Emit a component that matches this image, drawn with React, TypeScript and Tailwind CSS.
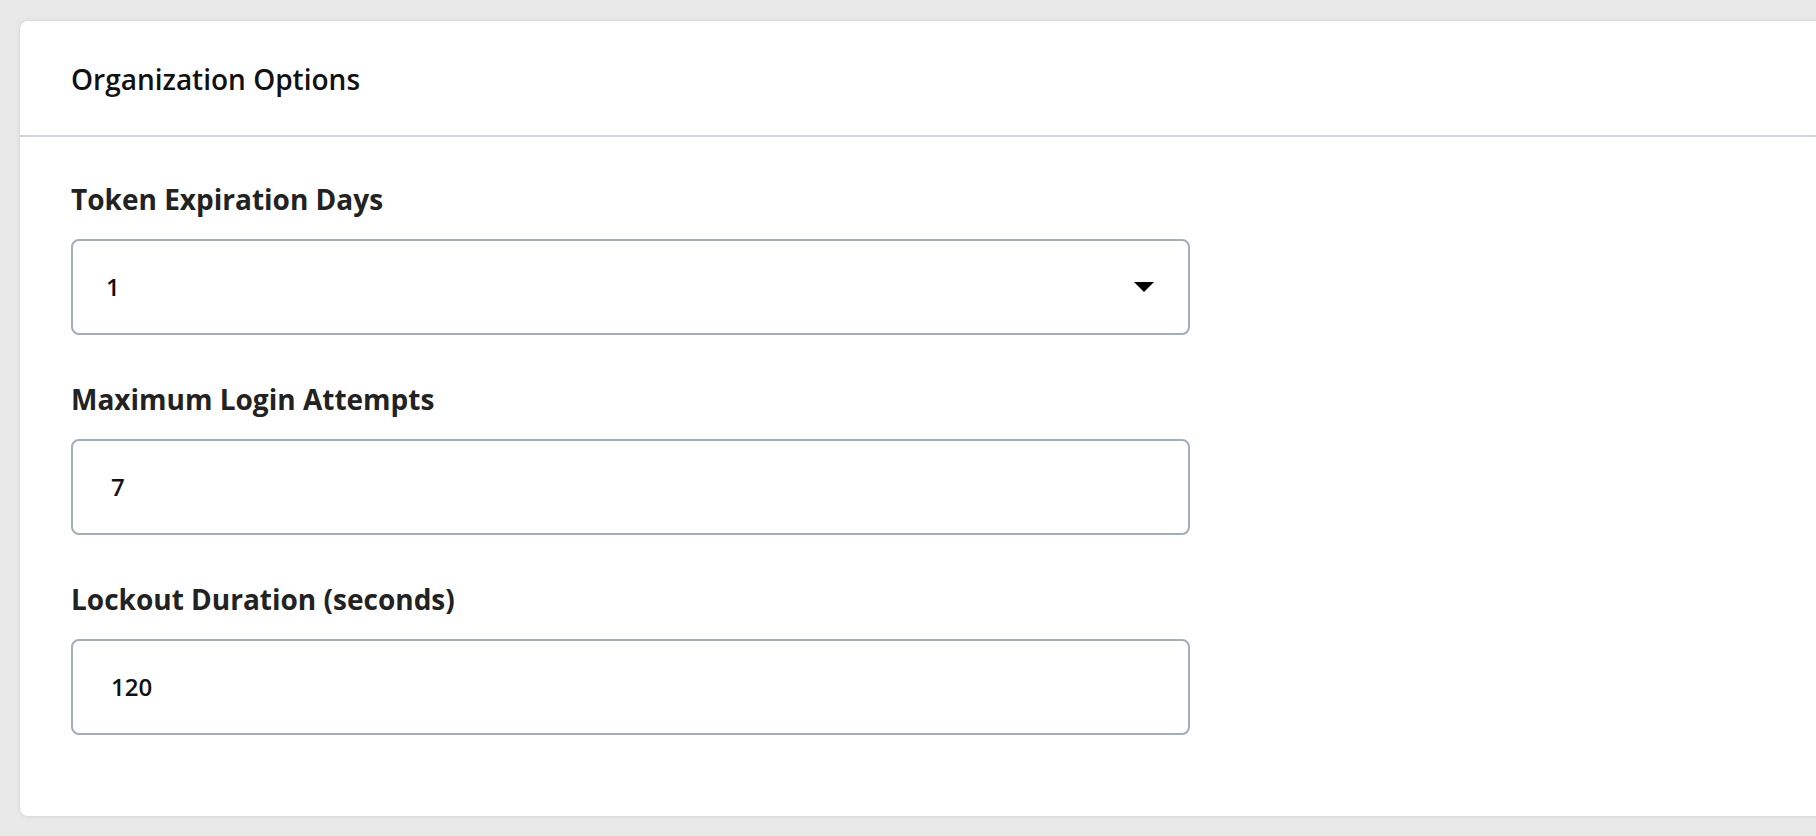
import React from 'react'

function Field({ label, value, select }: { label: string; value: string; select?: boolean }) {
  return (
    <div className="flex flex-col">
      <label className="text-[28px] leading-[34px] font-bold text-[#222222]">{label}</label>
      <div
        className={`mt-[23px] flex h-[96px] w-[1119px] items-center rounded-[8px] border-2 border-[#a4aeb7] bg-white ${
          select ? 'pl-[33px] pr-[34px]' : 'pl-[38px] pr-[34px]'
        }`}
      >
        <span className="flex-1 text-[24px] font-semibold text-[#111111]">{value}</span>
        {select && (
          <svg width="20" height="10" viewBox="0 0 20 10" className="shrink-0">
            <path d="M0 0 L20 0 L10 10 Z" fill="#000000" />
          </svg>
        )}
      </div>
    </div>
  )
}

export default function App() {
  return (
    <div className="min-h-screen overflow-hidden bg-[#e9e9e9] pl-5 pt-[21px] font-['Open_Sans',sans-serif]">
      <div className="w-[calc(100%+20px)] rounded-[8px] bg-white shadow-[0_0_4px_rgba(0,0,0,0.12)]">
        <div className="flex h-[116px] items-center border-b-2 border-[#d0d5d9] pl-[51px] pt-[1px]">
          <h5 className="text-[28px] font-semibold text-[#111111]">Organization Options</h5>
        </div>
        <div className="flex flex-col gap-[47px] pl-[51px] pt-[45px] pb-[81px]">
          <Field label="Token Expiration Days" value="1" select />
          <Field label="Maximum Login Attempts" value="7" />
          <Field label="Lockout Duration (seconds)" value="120" />
        </div>
      </div>
    </div>
  )
}
